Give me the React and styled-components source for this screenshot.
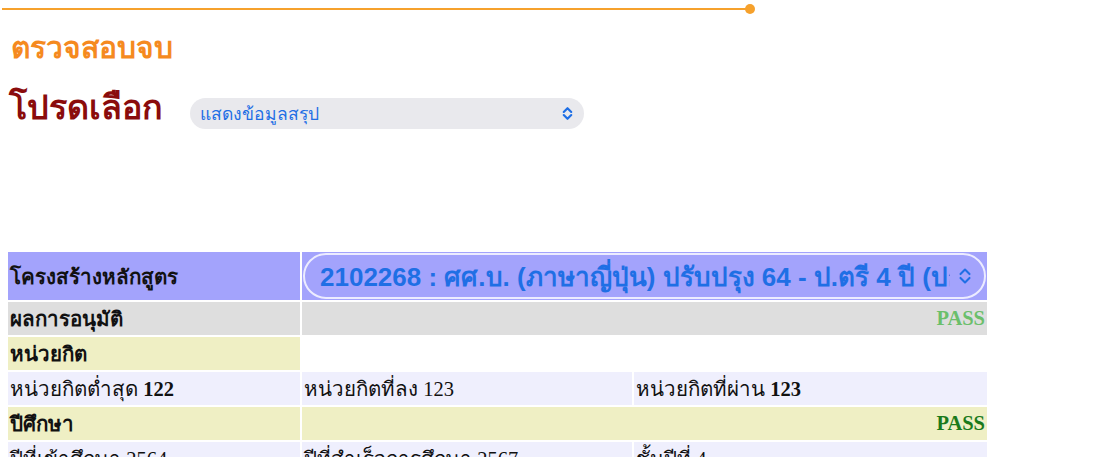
import React from "react";
import styled, { createGlobalStyle } from "styled-components";

const GlobalStyle = createGlobalStyle`
  body {
    margin: 0;
    background: #fff;
    font-family: "Liberation Serif", "Noto Sans", serif;
  }
`;

const rows = [
  { key: "credits", label: "หน่วยกิตต่ำสุด", value: "122", bold: true },
  { key: "taken", label: "หน่วยกิตที่ลง", value: "123", bold: false },
  { key: "passed", label: "หน่วยกิตที่ผ่าน", value: "123", bold: true },
];

function Chevron({ size = 14, color = "#1f6fe5", stroke = 2 }) {
  return (
    <svg width={size} height={size} viewBox="0 0 14 14" fill="none">
      <path d="M3.5 5.5 L7 2 L10.5 5.5" stroke={color} strokeWidth={stroke} strokeLinecap="round" strokeLinejoin="round" />
      <path d="M3.5 8.5 L7 12 L10.5 8.5" stroke={color} strokeWidth={stroke} strokeLinecap="round" strokeLinejoin="round" />
    </svg>
  );
}

export default function App() {
  return (
    <Page>
      <GlobalStyle />
      <Progress>
        <Line />
        <Dot />
      </Progress>
      <Heading>ตรวจสอบจบ</Heading>
      <ChooseRow>
        <Choose>โปรดเลือก</Choose>
        <Picker>
          <span>แสดงข้อมูลสรุป</span>
          <Chevron size={15} />
        </Picker>
      </ChooseRow>

      <Table>
        <colgroup>
          <col style={{ width: 292 }} />
          <col style={{ width: 330 }} />
          <col />
        </colgroup>
        <tbody>
          <tr>
            <Cell $bg="#a3a3fc" $h={48}>
              <Label>โครงสร้างหลักสูตร</Label>
            </Cell>
            <Cell $bg="#a3a3fc" colSpan={2} $pad="1px">
              <PlanPicker>
                <PlanText>2102268 : ศศ.บ. (ภาษาญี่ปุ่น) ปรับปรุง 64 - ป.ตรี 4 ปี (ปกติ)</PlanText>
                <Chevron size={18} stroke={1.6} />
              </PlanPicker>
            </Cell>
          </tr>
          <tr>
            <Cell $bg="#dedede">
              <Label>ผลการอนุมัติ</Label>
            </Cell>
            <Cell $bg="#dedede" colSpan={2} $align="right">
              <Pass $color="#6bbf6b">PASS</Pass>
            </Cell>
          </tr>
          <tr>
            <Cell $bg="#efefc4">
              <Label>หน่วยกิต</Label>
            </Cell>
            <Cell colSpan={2} />
          </tr>
          <tr>
            {rows.map((r) => (
              <Cell key={r.key} $bg="#efeffd">
                {r.label} <Num $bold={r.bold}>{r.value}</Num>
              </Cell>
            ))}
          </tr>
          <tr>
            <Cell $bg="#efefc4">
              <Label>ปีศึกษา</Label>
            </Cell>
            <Cell $bg="#efefc4" colSpan={2} $align="right">
              <Pass $color="#1b7a1b">PASS</Pass>
            </Cell>
          </tr>
          <tr>
            <Cell $bg="#efeffd">ปีที่เข้าศึกษา 2564</Cell>
            <Cell $bg="#efeffd">ปีที่สำเร็จการศึกษา 2567</Cell>
            <Cell $bg="#efeffd">ชั้นปีที่ 4</Cell>
          </tr>
        </tbody>
      </Table>
    </Page>
  );
}

const Page = styled.div`
  width: 1113px;
  height: 457px;
  overflow: hidden;
  position: relative;
`;

const Progress = styled.div`
  display: flex;
  align-items: center;
  width: 753px;
  height: 18px;
  padding-left: 2px;
`;

const Line = styled.div`
  flex: 1;
  height: 2px;
  background: #f6a12c;
`;

const Dot = styled.div`
  width: 10px;
  height: 10px;
  border-radius: 50%;
  background: #f6a12c;
  margin-left: -4px;
`;

const Heading = styled.h2`
  margin: 10px 0 0 11px;
  font-family: "Noto Sans", "DejaVu Sans", sans-serif;
  font-size: 30px;
  font-weight: 800;
  color: #f58a1f;
  line-height: 38px;
`;

const ChooseRow = styled.div`
  display: flex;
  align-items: flex-start;
  gap: 27px;
  margin: 17px 0 0 9px;
`;

const Choose = styled.h1`
  margin: 0;
  font-family: "Noto Sans", "DejaVu Sans", sans-serif;
  font-size: 34px;
  font-weight: 800;
  color: #8a0c0c;
  line-height: 46px;
`;

const Picker = styled.div`
  display: flex;
  align-items: center;
  justify-content: space-between;
  width: 394px;
  height: 31px;
  margin-top: 15px;
  box-sizing: border-box;
  padding: 0 9px 0 10px;
  border-radius: 16px;
  background: #e9e9ed;
  color: #1f6fe5;
  font-family: "Noto Sans", "DejaVu Sans", sans-serif;
  font-size: 17.5px;
`;

const Table = styled.table`
  margin: 121px 0 0 6px;
  width: 983px;
  border-collapse: separate;
  border-spacing: 2px;
  table-layout: fixed;
  font-size: 20.5px;
  color: #111;
`;

const Cell = styled.td`
  background: ${(p) => p.$bg || "transparent"};
  height: ${(p) => p.$h || 33}px;
  padding: ${(p) => p.$pad || "0 2px"};
  text-align: ${(p) => p.$align || "left"};
  vertical-align: middle;
  white-space: nowrap;
  overflow: hidden;
  box-sizing: border-box;
`;

const Label = styled.span`
  font-weight: 700;
`;

const Num = styled.span`
  font-weight: ${(p) => (p.$bold ? 700 : 400)};
`;

const Pass = styled.span`
  font-weight: 700;
  color: ${(p) => p.$color};
`;

const PlanPicker = styled.div`
  display: flex;
  align-items: center;
  gap: 6px;
  height: 46px;
  box-sizing: border-box;
  padding: 0 10px 0 15px;
  border: 2px solid #ececff;
  border-radius: 23px;
  color: #1f6fe5;
  font-family: "Liberation Sans", "Noto Sans", sans-serif;
  font-size: 26px;
  font-weight: 700;
`;

const PlanText = styled.span`
  flex: 1;
  overflow: hidden;
  white-space: nowrap;
`;
